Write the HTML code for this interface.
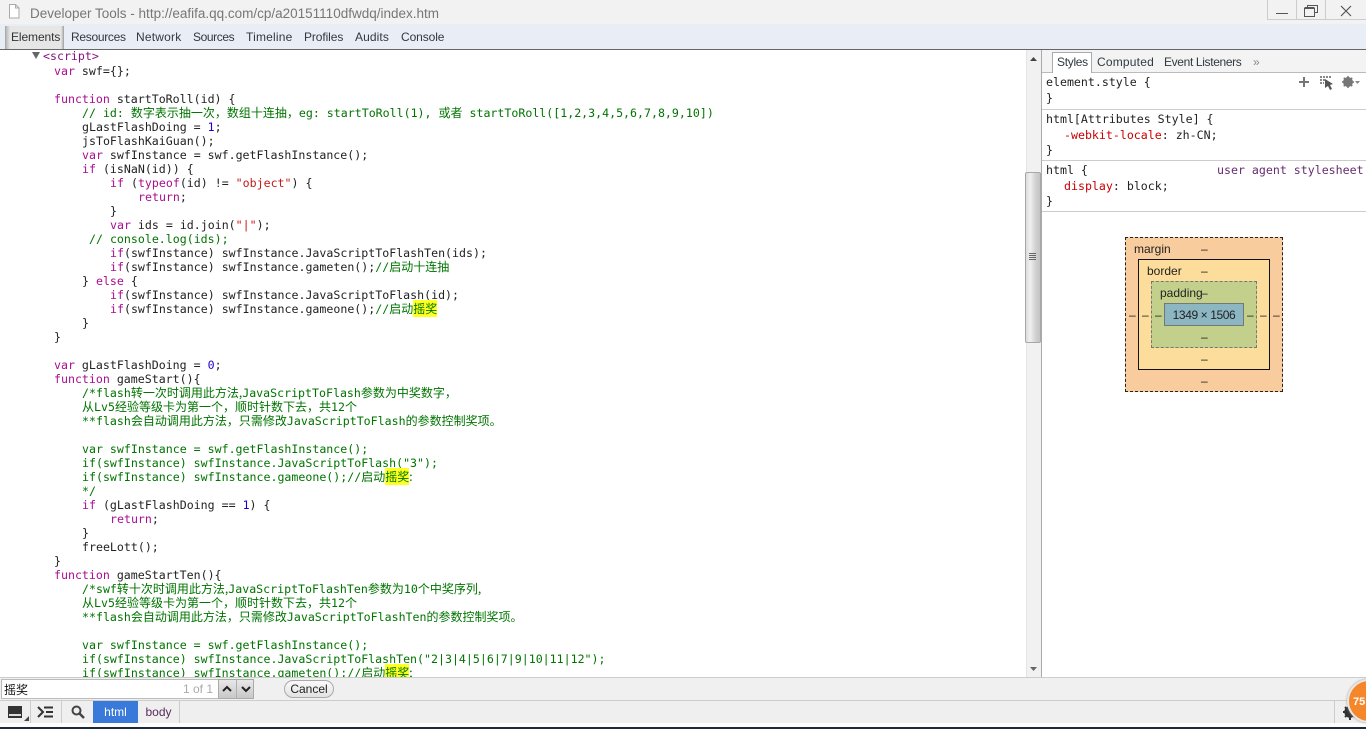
<!DOCTYPE html>
<html lang="zh"><head><meta charset="utf-8"><title>Developer Tools</title>
<style>
html,body{margin:0;padding:0;width:1366px;height:729px;overflow:hidden;background:#fff}
body{position:relative;font-family:"Liberation Sans","Noto Sans CJK SC",sans-serif;font-size:12px;color:#222}
.a{position:absolute;white-space:pre}
.bar{position:absolute;left:0;width:1366px}
.c{position:absolute;white-space:pre;font-family:"DejaVu Sans Mono","Noto Sans CJK SC",monospace;font-size:11.6px;line-height:14px;height:14px;color:#222}
.c i{font-style:normal;font-family:"Noto Sans CJK SC","WenQuanYi Zen Hei",sans-serif;font-size:12px;line-height:14px}
.k{color:#aa0d91}.s{color:#c41a16}.n{color:#1c00cf}.g{color:#007400}.t{color:#881280}
.h{background:#ffff22}
.tab{position:absolute;top:30px;height:15px;line-height:15px;font-size:12px;color:#303942;white-space:pre}
.m{position:absolute;font-size:12px;line-height:14px;color:#222;white-space:pre;text-align:center}
</style></head><body>
<div class="bar" style="top:0;height:24px;background:#f2f2f2"></div>
<svg class="a" style="left:8px;top:4px" width="12" height="15"><path d="M1.5 .5h6l3.5 3.5v10h-9.500zM7.500 .5v3.500h3.500" fill="#fff" stroke="#aaa"/></svg>
<div class="a" style="left:30px;top:5px;font-size:13.500px;line-height:17px;color:#777">Developer Tools - http://eafifa.qq.com/cp/a20151110dfwdq/index.htm</div>
<div class="a" style="left:1267px;top:0;width:99px;height:20px;border-left:1px solid #ccc;border-bottom:1px solid #ccc;box-sizing:border-box"></div>
<div class="a" style="left:1296px;top:0;width:1px;height:20px;background:#ccc"></div>
<div class="a" style="left:1325px;top:0;width:1px;height:20px;background:#ccc"></div>
<div class="a" style="left:1276px;top:13px;width:12px;height:1px;background:#555"></div>
<svg class="a" style="left:1304px;top:5px" width="14" height="12"><path d="M.5 3.500h10v8h-10zM.5 2.500h10M3.500 2.500v-2h10v7h-3" fill="none" stroke="#555"/></svg>
<svg class="a" style="left:1340px;top:5px" width="12" height="12"><path d="M1 1l10 10M11 1l-10 10" fill="none" stroke="#555" stroke-width="1.200"/></svg>

<div class="bar" style="top:24px;height:25px;background:#e9edf5"></div>
<div class="bar" style="top:49px;height:1px;background:#666"></div>
<div class="a" style="left:5px;top:26px;width:59px;height:23px;background:linear-gradient(90deg,#b8b8b8,#e6e6e6 4px,#e6e6e6 55px,#b8b8b8);border-left:1px solid #aaa;border-right:1px solid #aaa;box-sizing:border-box"></div>
<div class="tab" style="left:11px;color:#333;letter-spacing:-.1px">Elements</div>
<div class="tab" style="left:71px;letter-spacing:-.3px">Resources</div>
<div class="tab" style="left:136px;letter-spacing:.2px">Network</div>
<div class="tab" style="left:193px;letter-spacing:-.4px">Sources</div>
<div class="tab" style="left:246px;letter-spacing:.2px">Timeline</div>
<div class="tab" style="left:304px;letter-spacing:-.1px">Profiles</div>
<div class="tab" style="left:355px;letter-spacing:.1px">Audits</div>
<div class="tab" style="left:401px;letter-spacing:-.1px">Console</div>

<svg class="a" style="left:32px;top:52px" width="8" height="8"><path d="M0 0h8l-4 7z" fill="#666"/></svg>
<div class="c" style="left:43px;top:49px"><span class="t">&lt;script&gt;</span></div>
<div class="c" style="left:54px;top:64px"><span class="k">var</span> swf={};</div>
<div class="c" style="left:54px;top:92px"><span class="k">function</span> startToRoll(id) {</div>
<div class="c g" style="left:82px;top:106px;color:#007400">// id: <i>数字表示抽一次，数组十连抽，</i>eg: startToRoll(1), <i>或者</i> startToRoll([1,2,3,4,5,6,7,8,9,10])</div>
<div class="c" style="left:82px;top:120px">gLastFlashDoing = <span class="n">1</span>;</div>
<div class="c" style="left:82px;top:134px">jsToFlashKaiGuan();</div>
<div class="c" style="left:82px;top:148px"><span class="k">var</span> swfInstance = swf.getFlashInstance();</div>
<div class="c" style="left:82px;top:162px"><span class="k">if</span> (isNaN(id)) {</div>
<div class="c" style="left:110px;top:176px"><span class="k">if</span> (<span class="k">typeof</span>(id) != <span class="s">"object"</span>) {</div>
<div class="c" style="left:138px;top:190px"><span class="k">return</span>;</div>
<div class="c" style="left:110px;top:204px">}</div>
<div class="c" style="left:110px;top:218px"><span class="k">var</span> ids = id.join(<span class="s">"|"</span>);</div>
<div class="c" style="left:89px;top:232px;color:#007400">// console.log(ids);</div>
<div class="c" style="left:110px;top:246px"><span class="k">if</span>(swfInstance) swfInstance.JavaScriptToFlashTen(ids);</div>
<div class="c" style="left:110px;top:260px"><span class="k">if</span>(swfInstance) swfInstance.gameten();<span class="g">//<i>启动十连抽</i></span></div>
<div class="c" style="left:82px;top:274px">} <span class="k">else</span> {</div>
<div class="c" style="left:110px;top:288px"><span class="k">if</span>(swfInstance) swfInstance.JavaScriptToFlash(id);</div>
<div class="c" style="left:110px;top:302px"><span class="k">if</span>(swfInstance) swfInstance.gameone();<span class="g">//<i>启动<span class="h">摇奖</span></i></span></div>
<div class="c" style="left:82px;top:316px">}</div>
<div class="c" style="left:54px;top:330px">}</div>
<div class="c" style="left:54px;top:358px"><span class="k">var</span> gLastFlashDoing = <span class="n">0</span>;</div>
<div class="c" style="left:54px;top:372px"><span class="k">function</span> gameStart(){</div>
<div class="c g" style="left:82px;top:386px;color:#007400">/*flash<i>转一次时调用此方法,</i>JavaScriptToFlash<i>参数为中奖数字，</i></div>
<div class="c g" style="left:82px;top:400px;color:#007400"><i>从</i>Lv5<i>经验等级卡为第一个，顺时针数下去，共</i>12<i>个</i></div>
<div class="c g" style="left:82px;top:414px;color:#007400">**flash<i>会自动调用此方法，只需修改</i>JavaScriptToFlash<i>的参数控制奖项。</i></div>
<div class="c" style="left:82px;top:442px;color:#007400">var swfInstance = swf.getFlashInstance();</div>
<div class="c" style="left:82px;top:456px;color:#007400">if(swfInstance) swfInstance.JavaScriptToFlash("3");</div>
<div class="c" style="left:82px;top:470px;color:#007400">if(swfInstance) swfInstance.gameone();//<i>启动<span class="h">摇奖</span>:</i></div>
<div class="c" style="left:82px;top:484px;color:#007400">*/</div>
<div class="c" style="left:82px;top:498px"><span class="k">if</span> (gLastFlashDoing == <span class="n">1</span>) {</div>
<div class="c" style="left:110px;top:512px"><span class="k">return</span>;</div>
<div class="c" style="left:82px;top:526px">}</div>
<div class="c" style="left:82px;top:540px">freeLott();</div>
<div class="c" style="left:54px;top:554px">}</div>
<div class="c" style="left:54px;top:568px"><span class="k">function</span> gameStartTen(){</div>
<div class="c" style="left:82px;top:582px;color:#007400">/*swf<i>转十次时调用此方法,</i>JavaScriptToFlashTen<i>参数为</i>10<i>个中奖序列,</i></div>
<div class="c" style="left:82px;top:596px;color:#007400"><i>从</i>Lv5<i>经验等级卡为第一个，顺时针数下去，共</i>12<i>个</i></div>
<div class="c" style="left:82px;top:610px;color:#007400">**flash<i>会自动调用此方法，只需修改</i>JavaScriptToFlashTen<i>的参数控制奖项。</i></div>
<div class="c" style="left:82px;top:638px;color:#007400">var swfInstance = swf.getFlashInstance();</div>
<div class="c" style="left:82px;top:652px;color:#007400">if(swfInstance) swfInstance.JavaScriptToFlashTen("2|3|4|5|6|7|9|10|11|12");</div>
<div class="c" style="left:82px;top:666px;color:#007400">if(swfInstance) swfInstance.gameten();//<i>启动<span class="h">摇奖</span>;</i></div>

<div class="a" style="left:1026px;top:50px;width:15px;height:627px;background:#f1f1f1;border-left:1px solid #e4e4e4;box-sizing:border-box"></div>
<div class="a" style="left:1041px;top:50px;width:1px;height:627px;background:#aaa"></div>
<svg class="a" style="left:1030px;top:56px" width="8" height="6"><path d="M0 5h7l-3.500-4z" fill="#444"/></svg>
<svg class="a" style="left:1030px;top:666px" width="8" height="6"><path d="M0 1h7l-3.500 4z" fill="#666"/></svg>
<div class="a" style="left:1025px;top:172px;width:16px;height:171px;box-sizing:border-box;border:1px solid #a8a8a8;border-radius:2px;background:linear-gradient(90deg,#dcdcdc,#f0f0f0 30%,#d0d0d0 70%,#c4c4c4)"></div>
<div class="a" style="left:1029px;top:253px;width:7px;height:7px;background:repeating-linear-gradient(180deg,#666 0,#666 1px,transparent 1px,transparent 2px)"></div>

<div class="a" style="left:1042px;top:50px;width:324px;height:23px;background:#f3f3f3;border-bottom:1px solid #bbb;box-sizing:border-box"></div>
<div class="a" style="left:1052px;top:52px;width:40px;height:21px;background:#fff;border:1px solid #aaa;border-bottom:none;box-sizing:border-box"></div>
<div class="tab" style="left:1057px;top:55px;letter-spacing:-.3px">Styles</div>
<div class="tab" style="left:1097px;top:55px;letter-spacing:.2px">Computed</div>
<div class="tab" style="left:1164px;top:55px;letter-spacing:-.35px">Event Listeners</div>
<div class="tab" style="left:1253px;top:55px;color:#888">»</div>

<div class="c" style="left:1046px;top:75px">element.style {</div>
<div class="c" style="left:1046px;top:91px">}</div>
<div class="a" style="left:1042px;top:109px;width:324px;height:1px;background:#ccc"></div>
<div class="c" style="left:1046px;top:112px">html[Attributes Style] {</div>
<div class="c" style="left:1064px;top:128px"><span style="color:#c80000">-webkit-locale</span>: zh-CN;</div>
<div class="c" style="left:1046px;top:143px">}</div>
<div class="a" style="left:1042px;top:160px;width:324px;height:1px;background:#ccc"></div>
<div class="c" style="left:1046px;top:163px">html {</div>
<div class="c" style="left:1217px;top:163px;color:#662b71">user agent stylesheet</div>
<div class="c" style="left:1064px;top:179px"><span style="color:#c80000">display</span>: block;</div>
<div class="c" style="left:1046px;top:194px">}</div>
<div class="a" style="left:1042px;top:211px;width:324px;height:1px;background:#ccc"></div>

<svg class="a" style="left:1299px;top:77px" width="10" height="10"><path d="M5 0v10M0 5h10" stroke="#777" stroke-width="2"/></svg>
<svg class="a" style="left:1319px;top:76px" width="16" height="14"><path d="M1 1h12M1 4h5M1 7h4" fill="none" stroke="#888" stroke-width="2" stroke-dasharray="2 1"/><path d="M6 3l8 5-3 1 2 4-2 1-2-4-3 2z" fill="#555"/></svg>
<svg class="a" style="left:1342px;top:76px" width="18" height="12"><circle cx="6" cy="6" r="3.500" fill="none" stroke="#777" stroke-width="3"/><path d="M6 0v12M0 6h12M1.800 1.800l8.400 8.400M10.200 1.800l-8.400 8.400" stroke="#777" stroke-width="1.500"/><path d="M13 5h5l-2.500 3z" fill="#888"/></svg>

<div class="a" style="left:1125px;top:237px;width:158px;height:155px;background:#f9cc9d;border:1px dashed #222;box-sizing:border-box"></div>
<div class="a" style="left:1138px;top:259px;width:132px;height:111px;background:#fddd9b;border:1px solid #111;box-sizing:border-box"></div>
<div class="a" style="left:1151px;top:281px;width:106px;height:67px;background:#c3d08b;border:1px dashed #777;box-sizing:border-box"></div>
<div class="a" style="left:1164px;top:303px;width:80px;height:23px;background:#8cb6c2;border:1px solid #777;box-sizing:border-box"></div>
<div class="m" style="left:1134px;top:242px">margin</div>
<div class="m" style="left:1147px;top:264px">border</div>
<div class="m" style="left:1160px;top:286px">padding</div>
<div class="m" style="left:1164px;top:308px;width:80px;letter-spacing:-.4px">1349 × 1506</div>
<div class="m" style="left:1201px;top:242px;width:6px">‒</div>
<div class="m" style="left:1201px;top:264px;width:6px">‒</div>
<div class="m" style="left:1201px;top:286px;width:6px">‒</div>
<div class="m" style="left:1201px;top:330px;width:6px">‒</div>
<div class="m" style="left:1201px;top:352px;width:6px">‒</div>
<div class="m" style="left:1201px;top:374px;width:6px">‒</div>
<div class="m" style="left:1129px;top:308px;width:6px">‒</div>
<div class="m" style="left:1142px;top:308px;width:6px">‒</div>
<div class="m" style="left:1155px;top:308px;width:6px">‒</div>
<div class="m" style="left:1247px;top:308px;width:6px">‒</div>
<div class="m" style="left:1260px;top:308px;width:6px">‒</div>
<div class="m" style="left:1273px;top:308px;width:6px">‒</div>

<div class="bar" style="top:677px;height:24px;background:#f0f0f0;border-top:1px solid #ccc;box-sizing:border-box"></div>
<div class="a" style="left:1px;top:679px;width:218px;height:20px;background:#fff;border:1px solid #bbb;box-sizing:border-box"></div>
<div class="a" style="left:4px;top:682px;font-family:'Noto Sans CJK SC',sans-serif;font-size:12px;line-height:15px;color:#111">摇奖</div>
<div class="a" style="left:183px;top:682px;line-height:15px;color:#aaa">1 of 1</div>
<div class="a" style="left:218px;top:679px;width:36px;height:20px;background:linear-gradient(#e8e8e8,#c8c8c8);border:1px solid #aaa;box-sizing:border-box"></div>
<div class="a" style="left:236px;top:680px;width:1px;height:18px;background:#b0b0b0"></div>
<svg class="a" style="left:222px;top:685px" width="30" height="8"><path d="M1 6l4-4 4 4M20 2l4 4 4-4" fill="none" stroke="#222" stroke-width="2"/></svg>
<div class="a" style="left:284px;top:680px;width:50px;height:18px;border:1px solid #aaa;border-radius:9px;background:linear-gradient(#fafafa,#e2e2e2);box-sizing:border-box;text-align:center;line-height:17px;color:#222">Cancel</div>

<div class="bar" style="top:700px;height:23px;background:#efefef;border-top:1px solid #ccc;box-sizing:border-box"></div>
<div class="bar" style="top:723px;height:4px;background:#fdfdfd"></div>
<div class="bar" style="top:727px;height:2px;background:#1e2a36"></div>
<svg class="a" style="left:8px;top:706px" width="14" height="12"><rect width="14" height="12" fill="#333"/><rect x="1" y="8" width="12" height="2" fill="#ddd"/></svg>
<svg class="a" style="left:24px;top:716px" width="5" height="5"><path d="M5 0v5h-5z" fill="#444"/></svg>
<div class="a" style="left:30px;top:701px;width:1px;height:22px;background:#ccc"></div>
<svg class="a" style="left:37px;top:706px" width="16" height="12"><path d="M1 1l5 5-5 5" fill="none" stroke="#333" stroke-width="2"/><path d="M7 1.500h9M9 6h7M7 10.500h9" stroke="#333" stroke-width="2"/></svg>
<div class="a" style="left:61px;top:701px;width:1px;height:22px;background:#ccc"></div>
<svg class="a" style="left:71px;top:705px" width="14" height="14"><circle cx="5.500" cy="5.500" r="4" fill="none" stroke="#444" stroke-width="2"/><path d="M8.500 8.500l4.500 4.500" stroke="#444" stroke-width="2.500"/></svg>
<div class="a" style="left:93px;top:701px;width:45px;height:22px;background:#3879d9;color:#fff;text-align:center;line-height:22px;font-size:12px">html</div>
<div class="a" style="left:138px;top:701px;width:42px;height:22px;background:#efefef;border-right:1px solid #ccc;box-sizing:border-box;text-align:center;line-height:22px;font-size:12px;color:#5a2a5a">body</div>
<div class="a" style="left:1334px;top:701px;width:1px;height:22px;background:#ccc"></div>
<svg class="a" style="left:1342px;top:703px" width="16" height="18"><circle cx="8" cy="9" r="4" fill="none" stroke="#333" stroke-width="3.500"/><path d="M8 1v16M1 9h14M3 4l10 10M13 4l-10 10" stroke="#333" stroke-width="2"/></svg>
<div class="a" style="left:1347px;top:679px;width:44px;height:44px;border-radius:50%;background:#f5862a;border:2px solid #e8e8e8;box-sizing:border-box;box-shadow:0 0 2px #999"></div>
<div class="a" style="left:1353px;top:695px;font-size:11px;font-weight:bold;line-height:14px;color:#fff">75</div>
</body></html>
